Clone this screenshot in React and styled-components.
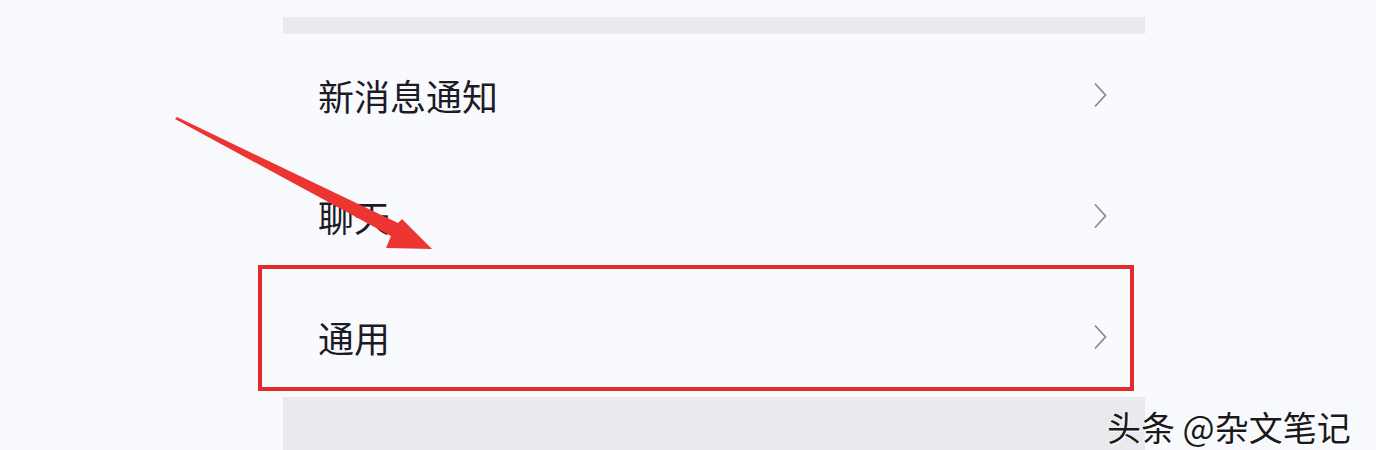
import styled, { createGlobalStyle } from "styled-components";

const Global = createGlobalStyle`
  body {
    margin: 0;
    background: #f8f9fd;
    font-family: "Noto Sans CJK SC", "Noto Sans", sans-serif;
  }
`;

const Page = styled.div`
  position: relative;
  width: 1376px;
  height: 450px;
  overflow: hidden;
  padding-top: 17px;
  box-sizing: border-box;
`;

const Panel = styled.div`
  margin-left: 283px;
  width: 862px;
  display: flex;
  flex-direction: column;
`;

const Divider = styled.div`
  height: ${(p) => p.$h}px;
  background: #e9eaed;
`;

const Row = styled.div`
  height: 121px;
  display: flex;
  align-items: center;
  justify-content: space-between;
  padding: 0 38px 0 35px;
  background: #f9fafe;
`;

const Label = styled.span`
  font-size: 36px;
  color: #1d1b26;
`;

const Chevron = () => (
  <svg width="14" height="26" viewBox="0 0 14 26">
    <path d="M2 1.5 L12.5 13 L2 24.5" fill="none" stroke="#8c8c93" strokeWidth="1.8" />
  </svg>
);

const Highlight = styled.div`
  position: absolute;
  left: 258px;
  top: 265px;
  width: 876px;
  height: 126px;
  border: 4px solid #e22c2c;
  box-sizing: border-box;
`;

const Arrow = styled.svg`
  position: absolute;
  left: 0;
  top: 0;
`;

const Watermark = styled.div`
  position: absolute;
  left: 1107px;
  top: 402px;
  font-size: 34px;
  color: #1a1a1a;
  text-shadow: 1px 1px 0 #fff, -1px 0 0 #fff;
  white-space: nowrap;
`;

const items = ["新消息通知", "聊天", "通用"];

export default function App() {
  return (
    <Page>
      <Global />
      <Panel>
        <Divider $h={17} />
        {items.map((t) => (
          <Row key={t}>
            <Label>{t}</Label>
            <Chevron />
          </Row>
        ))}
        <Divider $h={60} />
      </Panel>
      <Highlight />
      <Arrow width="1376" height="450">
        <polygon
          points="175,119 177,117 398,223 402,219 432,249 386,248 391,236"
          fill="#ec3430"
        />
      </Arrow>
      <Watermark>头条 @杂文笔记</Watermark>
    </Page>
  );
}
